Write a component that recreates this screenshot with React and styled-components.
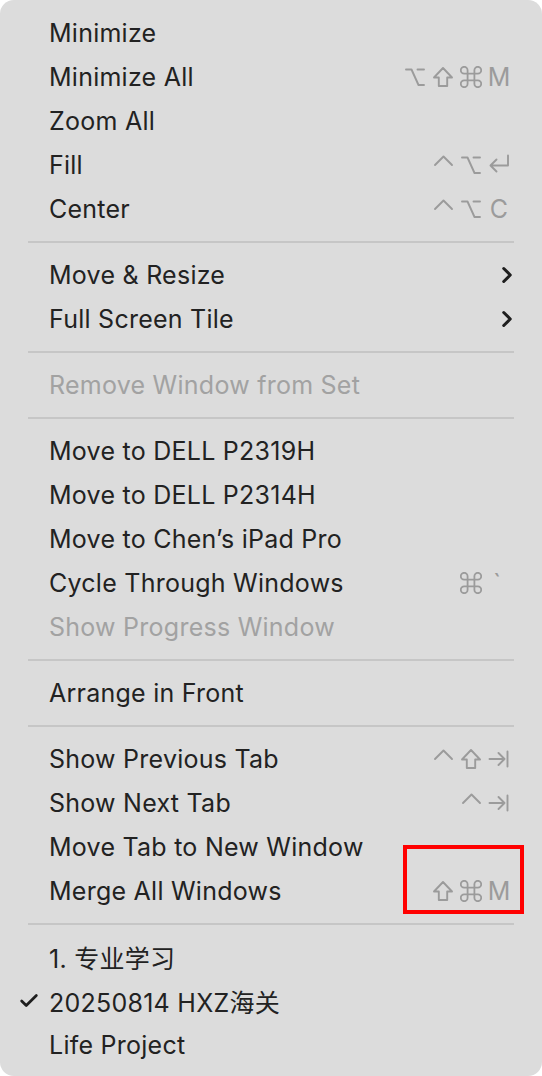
import React from 'react';
import styled, { createGlobalStyle } from 'styled-components';
import { ChevronRight, Check } from 'lucide-react';

const GlobalStyle = createGlobalStyle`
    html, body {
        margin: 0;
        padding: 0;
        background: #ffffff;
    }
    #root {
        width: 542px;
        height: 1076px;
    }
`;

const Menu = styled.div`
    position: relative;
    box-sizing: border-box;
    width: 542px;
    height: 1076px;
    background-color: #dcdcdc;
    border-radius: 14px;
    padding: 11px 0 9px 0;
    display: flex;
    flex-direction: column;
    font-family: Inter, "Noto Sans CJK SC", sans-serif;
    overflow: hidden;
`;

const Row = styled.div`
    height: 44px;
    display: flex;
    align-items: center;
    padding: 0 30px 0 16px;
    font-size: 25px;
    letter-spacing: 0.25px;
    color: ${p => p.$disabled ? '#a2a2a2' : '#222222'};
`;

const Gutter = styled.div`
    width: 33px;
    height: 44px;
    display: flex;
    align-items: center;
    padding-left: 2px;
    box-sizing: border-box;
    color: #1e1e1e;
`;

const Label = styled.span`
    flex: 1;
    white-space: nowrap;
`;

const Shortcut = styled.div`
    display: flex;
    align-items: center;
    gap: 6px;
    margin-right: 2px;
`;

const Key = styled.span`
    flex-shrink: 0;
    width: 22px;
    height: 22px;
    display: flex;
    align-items: center;
    justify-content: ${p => p.$align || 'center'};
    padding-left: ${p => p.$align ? '5px' : '0'};
    box-sizing: border-box;
    font-size: 25px;
    letter-spacing: 0;
    line-height: 22px;
    color: #9b9b9b;
`;

const Glyph = styled.svg`
    flex-shrink: 0;
    width: 22px;
    height: 22px;
    fill: none;
    stroke: #9b9b9b;
    stroke-width: 1.9;
    stroke-linecap: round;
    stroke-linejoin: round;
`;

const Separator = styled.div`
    height: 2px;
    margin: 10px 28px;
    background-color: #c6c6c6;
`;

const Highlight = styled.div`
    position: absolute;
    left: 403px;
    top: 845px;
    width: 121px;
    height: 69px;
    box-sizing: border-box;
    border: 4px solid #ff0000;
`;

const keys = {
    opt: <Glyph viewBox="0 0 22 22"><path d="M2 3.5H7.5L14.5 19H20M13.5 3.5H20" /></Glyph>,
    shift: <Glyph viewBox="0 0 22 22"><path d="M11 2L20 11.5H15.2V20H6.8V11.5H2Z" /></Glyph>,
    cmd: (
        <Glyph viewBox="2.3 2.3 19.4 19.4" style={{ strokeWidth: 1.8 * 19.4 / 22 }}>
            <path d="M15 6v12a3 3 0 1 0 3-3H6a3 3 0 1 0 3 3V6a3 3 0 1 0-3 3h12a3 3 0 1 0-3-3" />
        </Glyph>
    ),
    ctrl: <Glyph viewBox="0 0 22 22"><path d="M3 11L11.5 2.5L20 11" /></Glyph>,
    ret: <Glyph viewBox="0 0 22 22"><path d="M20 1.5V11.5H2.5M8.5 5.5L2.5 11.5L8.5 17.5" /></Glyph>,
    tab: <Glyph viewBox="0 0 22 22"><path d="M1.5 11H16.5M10.5 5L16.5 11L10.5 17M19.5 3.5V18.5" /></Glyph>,
};

const renderKey = (k, i) => (
    <Key key={i} $align={k === '`' ? 'flex-start' : undefined}>{keys[k] || k}</Key>
);

const groups = [
    [
        { label: 'Minimize' },
        { label: 'Minimize All', keys: ['opt', 'shift', 'cmd', 'M'] },
        { label: 'Zoom All' },
        { label: 'Fill', keys: ['ctrl', 'opt', 'ret'] },
        { label: 'Center', keys: ['ctrl', 'opt', 'C'] },
    ],
    [
        { label: 'Move & Resize', submenu: true },
        { label: 'Full Screen Tile', submenu: true },
    ],
    [
        { label: 'Remove Window from Set', disabled: true },
    ],
    [
        { label: 'Move to DELL P2319H' },
        { label: 'Move to DELL P2314H' },
        { label: 'Move to Chen\u2019s iPad Pro' },
        { label: 'Cycle Through Windows', keys: ['cmd', '`'] },
        { label: 'Show Progress Window', disabled: true },
    ],
    [
        { label: 'Arrange in Front' },
    ],
    [
        { label: 'Show Previous Tab', keys: ['ctrl', 'shift', 'tab'] },
        { label: 'Show Next Tab', keys: ['ctrl', 'tab'] },
        { label: 'Move Tab to New Window' },
        { label: 'Merge All Windows', keys: ['shift', 'cmd', 'M'] },
    ],
    [
        { label: '1. \u4e13\u4e1a\u5b66\u4e60' },
        { label: '20250814 HXZ\u6d77\u5173', checked: true },
        { label: 'Life Project' },
    ],
];

function MenuItem({ label, keys: combo, submenu, disabled, checked }) {
    return (
        <Row $disabled={disabled}>
            <Gutter>{checked && <Check size={22} strokeWidth={3} />}</Gutter>
            <Label>{label}</Label>
            {combo && <Shortcut>{combo.map(renderKey)}</Shortcut>}
            {submenu && <ChevronRight size={26} strokeWidth={2.8} color="#1e1e1e" style={{ marginRight: -8 }} />}
        </Row>
    );
}

export default function App() {
    return (
        <>
            <GlobalStyle />
            <Menu>
                {groups.map((group, gi) => (
                    <React.Fragment key={gi}>
                        {gi > 0 && <Separator />}
                        {group.map((item, i) => <MenuItem key={i} {...item} />)}
                    </React.Fragment>
                ))}
                <Highlight />
            </Menu>
        </>
    );
}
